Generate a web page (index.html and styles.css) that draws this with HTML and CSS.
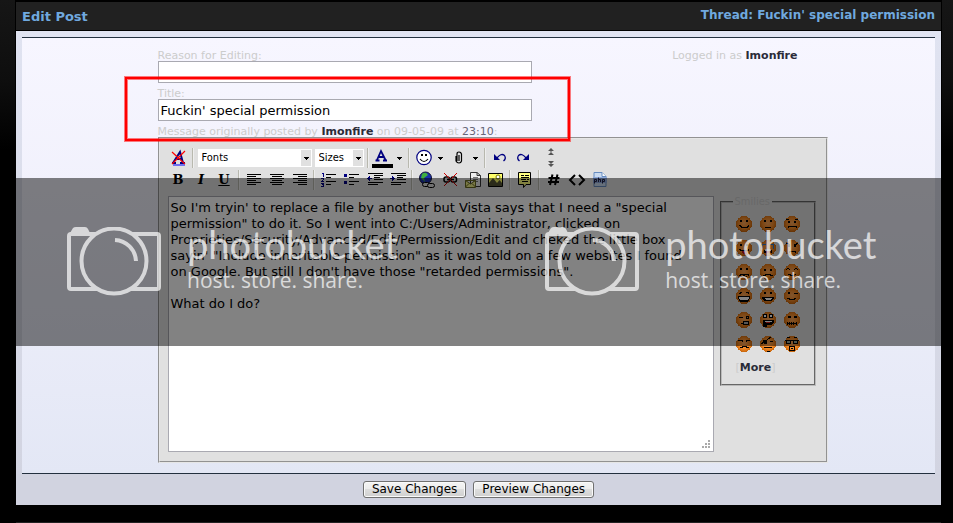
FILE: index.html
```html
<!DOCTYPE html>
<html lang="en">
<head>
<meta charset="utf-8">
<title>Edit Post</title>
<link rel="stylesheet" href="styles.css">
</head>
<body>
<svg class="defs" aria-hidden="true">
  <defs>
    <radialGradient id="skin" cx="50%" cy="45%" r="55%">
      <stop offset="0" stop-color="#ffa85a"/><stop offset=".6" stop-color="#f58a26"/><stop offset="1" stop-color="#c8660c"/>
    </radialGradient>
    <symbol id="ball" viewBox="0 0 16 16"><circle cx="8" cy="8" r="8" fill="url(#skin)"/></symbol>
    <symbol id="camera" viewBox="0 0 95 69">
      <g fill="none" stroke="#fff" stroke-width="4" stroke-linejoin="round">
        <path d="M29 7H4Q2 7 2 9V60Q2 62 4 62H30M65 7H90Q92 7 92 9V60Q92 62 90 62H64"/>
        <circle cx="47" cy="34" r="32.5"/>
        <path d="M48 13A22 22 0 0 1 69 34"/>
      </g>
      <path fill="#fff" d="M3 6L6 1Q7 0 9 0H18Q20 0 21 2L23 6Z"/>
    </symbol>
  </defs>
</svg>

<main class="frame">
  <header class="head">
    <h1>Edit Post</h1>
    <a href="#">Thread: Fuckin' special permission</a>
  </header>
  <form class="panel">
    <div class="inner">
      <div class="form">
        <div class="field">
          <div class="row">
            <label for="reason">Reason for Editing:</label>
            <span>Logged in as <a class="user" href="#">Imonfire</a></span>
          </div>
          <input id="reason" type="text">
        </div>
        <div class="field marked">
          <label for="title">Title:</label>
          <input id="title" type="text" value="Fuckin' special permission">
        </div>
        <div class="posted"><label for="message">Message originally posted by</label> <a class="user" href="#">Imonfire</a> on 09-05-09 at <span class="time">23:10</span>:</div>

        <div class="editor">
          <div class="compose">
            <div class="bar">
              <button type="button" aria-label="Remove formatting"><svg viewBox="0 0 23 22"><path d="M6 16L13 5L16 16M9 12H15M5 16H9M13 16H18" stroke="#000080" stroke-width="2" fill="none"/><path d="M6 18H18" stroke="#00f"/><path d="M5 5L18 17M18 4L5 17" stroke="#f00" stroke-width="1.2"/></svg></button>
              <i class="sep"></i>
              <span class="pick fonts"><select aria-label="Fonts"><option>Fonts</option></select></span>
              <span class="pick sizes"><select aria-label="Sizes"><option>Sizes</option></select></span>
              <i class="sep"></i>
              <button type="button" aria-label="Text colour"><svg viewBox="0 0 23 22"><path d="M6 13L10 4L14.500 13M8 10H13M4.500 13.500H8.500M12 13.500H16" stroke="#000080" stroke-width="1.800" fill="none"/><path d="M1 17H22V21H1Z"/></svg></button>
              <button type="button" class="drop" aria-label="Choose colour"></button>
              <i class="sep"></i>
              <button type="button" aria-label="Smilies"><svg viewBox="0 0 23 22"><circle cx="12" cy="10.500" r="7.200" fill="#fff" stroke="#000080" stroke-width="1.200"/><path d="M9 7H11V9H9ZM13 7H15V9H13Z"/><path d="M8 12Q12 17 16 12" fill="none" stroke="#000" stroke-width="1.200"/></svg></button>
              <button type="button" class="drop" aria-label="More smilies"></button>
              <button type="button" aria-label="Attachments"><svg viewBox="0 0 23 22"><path d="M12 8V14M10 14V7Q10 5 12 5T14.500 7V14Q14 16 12 16T9 14V9" fill="none" stroke="#000" stroke-width="1.200"/></svg></button>
              <button type="button" class="drop" aria-label="Attachment list"></button>
              <i class="sep"></i>
              <button type="button" aria-label="Undo"><svg viewBox="0 0 23 22"><path d="M8.500 11.500Q13 5.500 16.500 8.500Q18.500 11.500 15.500 14" stroke="#000080" stroke-width="1.300" fill="none"/><path d="M6 7V13H12Z" fill="#000080"/></svg></button>
              <button type="button" aria-label="Redo"><svg viewBox="0 0 23 22"><path d="M15.500 11.500Q11 5.500 7.500 8.500Q5.500 11.500 8.500 14" stroke="#000080" stroke-width="1.300" fill="none"/><path d="M18 7V13H12Z" fill="#000080"/></svg></button>
              <span class="resize">
                <button type="button" aria-label="Decrease size"><svg viewBox="0 0 9 8"><path d="M4 0L7 3H1ZM3.500 3H4.500V4H3.500ZM4 4L7 7H1Z" fill="#555"/></svg></button>
                <button type="button" aria-label="Increase size"><svg viewBox="0 0 9 8"><path d="M1 1H7L4 4ZM1 4H7L4 7Z" fill="#555"/></svg></button>
              </span>
            </div>
            <div class="bar">
              <button type="button" class="letter b">B</button>
              <button type="button" class="letter i">I</button>
              <button type="button" class="letter u">U</button>
              <i class="sep"></i>
              <button type="button" aria-label="Align left"><svg class="px" viewBox="0 0 23 22"><path d="M5 5.500H19M5 7.500H14M5 9.500H19M5 11.500H14M5 13.500H19M5 15.500H14" stroke="#000"/></svg></button>
              <button type="button" aria-label="Align centre"><svg class="px" viewBox="0 0 23 22"><path d="M5 5.500H19M7 7.500H17M5 9.500H19M7 11.500H17M5 13.500H19M7 15.500H17" stroke="#000"/></svg></button>
              <button type="button" aria-label="Align right"><svg class="px" viewBox="0 0 23 22"><path d="M5 5.500H19M10 7.500H19M5 9.500H19M10 11.500H19M5 13.500H19M10 15.500H19" stroke="#000"/></svg></button>
              <i class="sep"></i>
              <button type="button" aria-label="Numbered list"><svg class="px" viewBox="0 0 23 22"><path d="M5 4.500H7M6.500 4V8M4 9.500H7M6.500 10V11M5 11.500H6M4 12.500H7M4 14.500H7M5 15.500H7M6.500 15V17M4 17.500H7" stroke="#000080"/><path d="M9 5.500H19M9 8.500H14M9 12.500H19M9 15.500H14" stroke="#000"/></svg></button>
              <button type="button" aria-label="Bulleted list"><svg class="px" viewBox="0 0 23 22"><path d="M4 5H7V8H4ZM4 12H7V15H4Z" fill="#000080"/><path d="M9 5.500H19M9 8.500H14M9 12.500H19M9 15.500H14" stroke="#000"/></svg></button>
              <button type="button" aria-label="Outdent"><svg class="px" viewBox="0 0 23 22"><path d="M5 4.500H20M11 6.500H20M11 8.500H17M11 10.500H20M5 13.500H20M5 15.500H15" stroke="#000"/><path d="M4 9.500H9" stroke="#000080"/><path d="M7 7V12L4 9.500Z" fill="#000080"/></svg></button>
              <button type="button" aria-label="Indent"><svg class="px" viewBox="0 0 23 22"><path d="M5 4.500H20M11 6.500H20M11 8.500H17M11 10.500H20M5 13.500H20M5 15.500H15" stroke="#000"/><path d="M4 9.500H9" stroke="#000080"/><path d="M6 7V12L9 9.500Z" fill="#000080"/></svg></button>
              <i class="sep"></i>
              <button type="button" aria-label="Insert link"><svg viewBox="0 0 23 22"><circle cx="10.500" cy="9" r="6" fill="#1a2fae" stroke="#113"/><path d="M7 5Q11 2 13 6L9 9L10 13L6 9Z" fill="#3fae3f"/><rect x="7.500" y="13.500" width="7" height="4" rx="2" fill="#ddd" stroke="#000"/><rect x="12.500" y="14.500" width="7" height="4" rx="2" fill="#ddd" stroke="#000"/></svg></button>
              <button type="button" aria-label="Remove link"><svg viewBox="0 0 23 22"><rect x="6" y="8" width="5.500" height="5" rx="2" fill="none" stroke="#000" stroke-width="1.500"/><rect x="13" y="8" width="5.500" height="5" rx="2" fill="none" stroke="#000" stroke-width="1.500"/><path d="M9 10.500H16" stroke="#000" stroke-width="1.500"/><path d="M6 4L19 17M19 4L6 17" stroke="#c00"/></svg></button>
              <button type="button" aria-label="Insert email"><svg viewBox="0 0 23 22"><path d="M9.500 3.500H16L19.500 6.500V17.500H9.500ZM16 3.500V6.500H19.500" fill="#eee" stroke="#333"/><path d="M12 8.500H17M12 10.500H17M12 12.500H17" stroke="#777"/><path d="M4.500 11.500H14.500V18.500H4.500ZM4.500 11.500L9.500 15L14.500 11.500M4.500 18L8 14.500M14.500 18L11 14.500" fill="#ee8" stroke="#662"/></svg></button>
              <button type="button" aria-label="Insert image"><svg viewBox="0 0 23 22"><path d="M4.500 4.500H18.500V17.500H4.500Z" fill="#ffff6a" stroke="#000"/><circle cx="14" cy="8" r="2" fill="#fff" stroke="#770"/><path d="M5 14L9 9L13 14L15.500 11L18 14V17H5Z" fill="#553"/></svg></button>
              <i class="sep"></i>
              <button type="button" aria-label="Quote"><svg viewBox="0 0 23 22"><path d="M5.500 3.500H17.500V15.500H13L10.500 18.500V15.500H5.500Z" fill="#ffff80" stroke="#000"/><path d="M8 6.500H11M12 6.500H16M8 8.500H16M8 10.500H13M14 10.500H16M9 12.500H15" stroke="#000"/></svg></button>
              <i class="sep"></i>
              <button type="button" aria-label="Code"><svg viewBox="0 0 23 22"><path d="M10.500 5.500L8 16M15.500 5.500L13 16M6.500 9H17.500M6 13H17" stroke="#000" stroke-width="2"/></svg></button>
              <button type="button" aria-label="HTML"><svg viewBox="0 0 23 22"><path d="M10 6L5 11L10 16M14 6L19 11L14 16" fill="none" stroke="#000" stroke-width="2"/></svg></button>
              <button type="button" aria-label="PHP"><svg viewBox="0 0 23 22"><path d="M6 3.500H14L18 7.500V17.500H6Z" fill="#c9daf0" stroke="#678cc0"/><path d="M14 3.500V7.500H18" fill="#fff" stroke="#678cc0"/><path d="M5 8H19V14H5Z" fill="#8eaadb"/><path d="M6.500 14.500V10.500H8.500V12.500H7M10.500 8.500V13M10.500 10.500H12.500V13M14.500 14.500V10.500H16.500V12.500H14.500" fill="none" stroke="#224"/></svg></button>
            </div>
            <textarea id="message" spellcheck="false">So I'm tryin' to replace a file by another but Vista says that I need a "special permission" to do it. So I went into C:/Users/Administrator, clicked on Proprieties/Security/Advanced/Edit/Permission/Edit and cheked the little box sayin' "Include inheritable permission" as it was told on a few websites I found on Google. But still I don't have those "retarded permissions".

What do I do?</textarea>
          </div>
          <fieldset class="smilies">
            <legend>Smilies</legend>
            <div class="faces">
              <svg viewBox="0 0 16 16"><use href="#ball"/><path d="M4 4h2v2H4zM10 4h2v2h-2z"/><path class="l" d="M3 9.500h1v1h1v1h6v-1h1v-1h1"/></svg>
              <svg viewBox="0 0 16 16"><use href="#ball"/><path d="M4 4h2v2H4zM10 4h2v2h-2z"/><path class="l" d="M5 11.500h6"/></svg>
              <svg viewBox="0 0 16 16"><use href="#ball"/><path d="M4 5h2v2H4zM10 5h2v2h-2z"/><path class="l" d="M2 3.500h3M11 3.500h3M4 11.500v-1h8v1"/></svg>
              <svg viewBox="0 0 16 16"><use href="#ball"/><path d="M4 4h2v2H4zM10 4h2v2h-2z"/><path class="l" d="M3 9.500h1v1h8v-1h1"/><path d="M6 11h5v3H7z" fill="#c01818"/></svg>
              <svg viewBox="0 0 16 16"><use href="#ball"/><path d="M2 4h4v1H3v4H2zM10 4h4v5h-1V5h-3z" fill="#2878c8"/><path d="M5 9h6l1 2v2H4v-2z"/><path d="M5 9h6v2H5z" fill="#fff"/><path d="M6 11h4v2H6z" fill="#d02020"/></svg>
              <svg viewBox="0 0 16 16"><use href="#ball"/><path d="M4 5h2v2H4zM10 5h2v2h-2z"/><path class="l" d="M2 3.500h2v1h2M14 3.500h-2v1h-2M5 12.500v-1h6v1"/></svg>
              <svg viewBox="0 0 16 16"><use href="#ball"/><path d="M4 4h2v2H4zM10 4h2v2h-2z"/><path class="l" d="M3 11.500h1v-1h3v2M8 12.500v-2h4v1h1M5 12.500h2M9 12.500h2"/></svg>
              <svg viewBox="0 0 16 16"><use href="#ball"/><path d="M4 5h2v2H4zM10 5h2v2h-2z"/><path class="l" d="M3.500 12v-1h2v-1h5v1h2v1"/></svg>
              <svg viewBox="0 0 16 16"><use href="#ball"/><path class="l" d="M2 6l2-2l2 2M10 6l2-2l2 2M4 10.500h2v1h4v-1h2"/></svg>
              <svg viewBox="0 0 16 16"><use href="#ball"/><path class="l" d="M3 5.500h1v-1h2M10 4.500h2v1h1"/><path d="M2 8h12v2l-2 4H4l-2-4z"/><path d="M3 9h10v1l-1 2H4z" fill="#fff"/></svg>
              <svg viewBox="0 0 16 16"><use href="#ball"/><path d="M4 4h2v2H4zM10 4h2v2h-2zM2 9h12v2l-3 2H5l-3-2z"/><path d="M4 10h8v1l-2 1H6z" fill="#fff"/></svg>
              <svg viewBox="0 0 16 16"><use href="#ball"/><path d="M4 4h2v2H4z"/><path class="l" d="M10 5.500h4M3 10.500h2v1h5v-1h2"/></svg>
              <svg viewBox="0 0 16 16"><use href="#ball"/><path class="l" d="M3 5.500h4M10 4h2v2h-2zM5 11.500h3"/><path d="M7 9h6v4H7z"/><path d="M8 10h4v2H8z" fill="#aaa"/></svg>
              <svg viewBox="0 0 16 16"><use href="#ball"/><path d="M3 2h4v4H3zM9 2h4v4H9zM3 8h11v3l-3 2H7v2H3z"/><path d="M4 3h2v2H4zM10 3h2v2h-2zM5 9h7v1H5z" fill="#fff"/><path d="M6 10h4v1H6z" fill="#d02020"/></svg>
              <svg viewBox="0 0 16 16"><use href="#ball"/><path class="l" d="M4 4.500h2v1H4zM10 4.500h2v1h-2zM3 11.500h10M3.500 10v3M5.500 10v3M7.500 10v3M9.500 10v3M12.500 10v3"/></svg>
              <svg viewBox="0 0 16 16"><use href="#ball"/><path class="l" d="M2 4.500h4v1M10 5.500v-1h4M4 12v-1h2v-1h4v1h2v1"/></svg>
              <svg viewBox="0 0 16 16"><use href="#ball"/><path class="l" d="M1 8L11 1M10 5.500h3M4 11.500h8M7 15h3"/><path d="M3 4h4v4H4z"/></svg>
              <svg viewBox="0 0 16 16"><use href="#ball"/><path class="l" d="M3 1.500h3M10 1.500h3M1 4.500h14M2.500 4v3.500h4V4M9.500 4v3.500h4V4M5.500 15v-4.500h5V15M5 14.500h6M7 12.500h2"/><path d="M3 5h3v2H3zM10 5h3v2h-3z" fill="#9a9"/></svg>
            </div>
            <div class="more">[<a class="user" href="#">More</a>]</div>
          </fieldset>
        </div>
      </div>
    </div>
    <div class="actions">
      <button type="submit">Save Changes</button>
      <button type="button">Preview Changes</button>
    </div>
  </form>
</main>
<div class="next"></div>

<div class="watermark">
  <div class="mark"><svg><use href="#camera"/></svg><div><p class="brand">photobucket</p><p class="motto">host. store. share.</p></div></div>
  <div class="mark"><svg><use href="#camera"/></svg><div><p class="brand">photobucket</p><p class="motto">host. store. share.</p></div></div>
</div>
</body>
</html>
```
FILE: styles.css
```css
*, ::before, ::after { box-sizing: border-box; }

body {
  margin: 0;
  position: relative;
  background: linear-gradient(#161616, #0e0e0e 80px, #000 150px) #000;
  background-repeat: no-repeat;
  color: #ccc;
  font: 11px/11px Verdana, "DejaVu Sans", sans-serif;
}

a { color: inherit; text-decoration: none; }
button, input, select, textarea { font-family: inherit; color: #000; margin: 0; }
.defs { position: absolute; width: 0; height: 0; }

.frame { margin: 0 11px 0 15px; border: 1px solid #000; border-top-width: 2px; }

.head {
  display: flex;
  justify-content: space-between;
  align-items: center;
  height: 29px;
  padding: 0 6px;
  background: #212121;
  border-bottom: 1px solid #000;
  color: #70a9df;
  font-size: 12px;
  font-weight: bold;
}
.head h1 { margin: 0; font-size: 13px; }
.head a { padding-bottom: 2px; }

.panel { padding-top: 6px; background: linear-gradient(#e0e3f1, #d1d3e0); }
.inner {
  margin: 0 6px;
  padding: 12px 14px 10px 12px;
  border: solid #23303f;
  border-width: 1px 0;
  background: linear-gradient(#f7f6ff, #f1f1fc 35%, #e3e7f5);
}
.form { max-width: 640px; margin: 0 auto; }

.field { margin-bottom: 5px; }
.field label { display: block; }
.row { display: flex; justify-content: space-between; }
.user { color: #2b2b38; font-weight: bold; }
.time { color: #667; }
.field input {
  display: block;
  width: 374px;
  height: 22px;
  padding: 0 2px;
  border: 1px solid #a9a9b1;
  background: #fff;
  font-size: 13px;
}

.marked { position: relative; }
.marked::after {
  content: "";
  position: absolute;
  z-index: 1;
  left: -33px;
  top: -11px;
  width: 445px;
  height: 64px;
  border: 2px solid #f00;
  box-shadow: 0 0 0 1px #ff000080, inset 0 0 0 1px #ff000080;
  pointer-events: none;
}

.editor {
  display: flex;
  align-items: flex-start;
  gap: 6px;
  margin-right: -30px;
  padding: 8px 10px 9px 8px;
  border: 2px groove #e6e6e6;
  background: #e0e0e0;
}
.compose { flex: 1; }

.bar { display: flex; align-items: center; height: 22px; margin-left: -1px; }
.bar button { width: 23px; height: 22px; padding: 0; border: 0; background: none; }
.bar svg { display: block; width: 100%; height: 100%; }
.px { shape-rendering: crispEdges; }
.sep { width: 2px; height: 20px; margin: 0 2px; background: linear-gradient(90deg, #b8b8ae 50%, #eee 50%); }

.pick { position: relative; height: 18px; margin: 0 1px 0 2px; }
.pick select {
  appearance: none;
  width: 100%;
  height: 18px;
  padding: 0 4px;
  border: 0;
  border-radius: 0;
  background: #fff;
  font: 11px/18px "DejaVu Sans Condensed", Tahoma, sans-serif;
}
.fonts { width: 114px; }
.sizes { width: 49px; }
.pick::after {
  content: "";
  position: absolute;
  right: 1px;
  top: 1px;
  width: 10px;
  height: 16px;
  background: linear-gradient(#000, #000) 3px 7px / 5px 1px no-repeat, linear-gradient(#000, #000) 4px 8px / 3px 1px no-repeat, linear-gradient(#000, #000) 5px 9px / 1px 1px no-repeat, #e0e0e0;
  pointer-events: none;
}
.bar .drop {
  width: 12px;
  background: linear-gradient(#000, #000) 3px 10px / 5px 1px no-repeat, linear-gradient(#000, #000) 4px 11px / 3px 1px no-repeat, linear-gradient(#000, #000) 5px 12px / 1px 1px no-repeat;
}
.resize { display: flex; flex-direction: column; gap: 4px; margin-left: 13px; }
.bar .resize button { width: 9px; height: 8px; }
.letter { font: bold 13px/22px "DejaVu Serif", serif; }
.i { font-style: italic; }
.u { text-decoration: underline; }

textarea {
  --dot: linear-gradient(#aaa, #aaa);
  display: block;
  width: 100%;
  height: 256px;
  margin-top: 5px;
  padding: 3px 16px 3px 2px;
  border: 1px solid #a9a9b1;
  background:
    var(--dot) right 3px bottom 3px / 2px 2px no-repeat,
    var(--dot) right 6px bottom 3px / 2px 2px no-repeat,
    var(--dot) right 9px bottom 3px / 2px 2px no-repeat,
    var(--dot) right 3px bottom 6px / 2px 2px no-repeat,
    var(--dot) right 6px bottom 6px / 2px 2px no-repeat,
    var(--dot) right 3px bottom 9px / 2px 2px no-repeat,
    #fff;
  font-size: 13px;
  line-height: 16px;
  resize: none;
}

.smilies {
  width: 96px;
  height: 190px;
  margin: 49px 0 0;
  padding: 0 14px;
  border: 2px groove #bbb;
}
.smilies legend {
  height: 12px;
  margin-left: -3px;
  padding: 0 2px;
  font: 11px/12px "DejaVu Sans Condensed", Tahoma, sans-serif;
}
.faces { display: grid; grid-template-columns: repeat(3, 16px); gap: 8px; padding-top: 8px; }
.faces svg { width: 16px; height: 16px; shape-rendering: crispEdges; }
.l { fill: none; stroke: #000; }
.more { padding-top: 10px; }

.actions { display: flex; justify-content: center; gap: 7px; padding: 7px 0; background: #d1d3e0; }
.actions button {
  height: 17px;
  padding: 0 8px;
  border: 1px solid #707070;
  border-radius: 3px;
  background: linear-gradient(#f4f4f4, #ececec 50%, #dddddd 50%, #cfcfcf);
  box-shadow: inset 0 0 0 1px #fafafa;
  font-size: 12px;
  line-height: 15px;
}
.next { height: 17px; margin: 0 12px 0 16px; border-bottom: 1px solid #222; }

.watermark {
  position: absolute;
  z-index: 2;
  left: 0;
  right: 0;
  top: 178px;
  height: 168px;
  display: flex;
  gap: 147px;
  padding: 46px 0 0 67px;
  background: #0000007d;
  color: #fff;
  pointer-events: none;
}
.mark { display: flex; flex: none; gap: 25px; opacity: .7; }
.mark svg { width: 95px; height: 69px; margin-top: 3px; }
.mark p { margin: 0; }
.brand { font: 38px/40px Lato, sans-serif; }
.motto { font: 21px/32px "Open Sans", sans-serif; }
```
